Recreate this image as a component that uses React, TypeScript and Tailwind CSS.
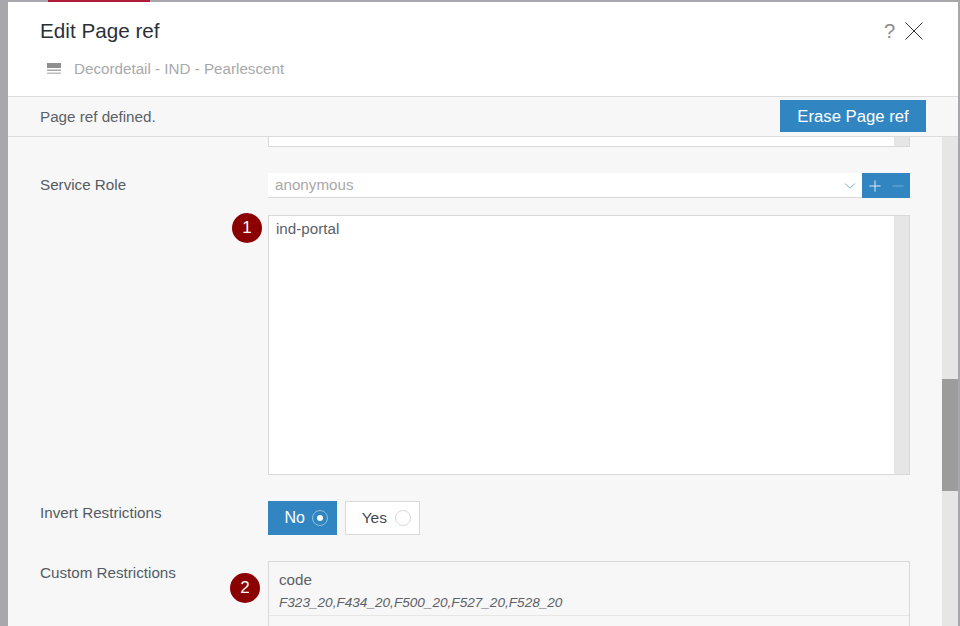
import { Minus, Plus, ChevronDown } from "lucide-react";

function Label({ children }: { children: string }) {
  return <div className="w-[228px] shrink-0 pt-[2px] text-[15.2px] leading-[20px] text-[#555b63]">{children}</div>;
}

function Badge({ n, className }: { n: number; className: string }) {
  return (
    <span
      className={`absolute flex h-[30px] w-[30px] items-center justify-center rounded-full bg-[#8b0000] text-[17px] text-white ${className}`}
    >
      {n}
    </span>
  );
}

function FakeScrollbar() {
  return <div className="w-[15px] shrink-0 bg-[#e6e6e6]" />;
}

export default function App() {
  return (
    <div className="flex h-[626px] w-[960px] flex-col overflow-hidden bg-[#a8a8ac] font-['Liberation_Sans',sans-serif]">
      <div className="ml-[48px] h-[2px] w-[102px] shrink-0 bg-[#b01c3c]" />
      <div className="ml-[8px] mr-[2px] flex min-h-0 flex-1 flex-col bg-white">
        <header className="relative h-[95px] shrink-0 border-b-[1px] border-[#dcdcdc] pl-[32px]">
          <h1 className="pt-[16px] text-[20.7px] leading-[26px] text-[#2b3038]">Edit Page ref</h1>
          <div className="mt-[15px] flex items-center text-[15.2px] leading-[20px] text-[#a9a9a9]">
            <svg width="14" height="14" viewBox="0 0 14 14" className="ml-[7px] mr-[13px]">
              <rect x="0" y="1" width="14" height="5" fill="#8f8f8f" />
              <rect x="0" y="7.5" width="14" height="1.5" fill="#a8a8a8" />
              <rect x="0" y="10.5" width="14" height="1.5" fill="#bdbdbd" />
            </svg>
            Decordetail - IND - Pearlescent
          </div>
          <div className="absolute right-[35px] top-[19px] flex items-center gap-[10px]">
            <span className="text-[20px] leading-[20px] text-[#8a8a8a]">?</span>
            <svg width="18" height="18" viewBox="0 0 18 18" stroke="#333" strokeWidth="1" fill="none">
              <path d="M0.5 0.5 L17.5 17.5 M17.5 0.5 L0.5 17.5" />
            </svg>
          </div>
        </header>

        <div className="flex h-[40px] shrink-0 items-center justify-between border-b-[1px] border-[#dcdcdc] bg-[#f7f7f7] pb-[1px] pl-[32px] pr-[32px]">
          <span className="pt-[2px] text-[15.2px] text-[#5c6168]">Page ref defined.</span>
          <button className="h-[32px] w-[146px] bg-[#3186c2] pt-[1px] text-[16.7px] text-white">Erase Page ref</button>
        </div>

        <div className="flex min-h-0 flex-1 bg-[#f7f7f7]">
          <div className="min-w-0 flex-1 overflow-hidden pl-[32px] pr-[32px]">
            <div className="ml-[228px] flex h-[10px] justify-end border-x-[1px] border-b-[1px] border-[#d9d9d9] bg-white">
              <FakeScrollbar />
            </div>

            <div className="mt-[26px] flex">
              <Label>Service Role</Label>
              <div className="relative flex-1">
                <div className="flex h-[25px]">
                  <div className="flex flex-1 items-center justify-between border-b-[1px] border-[#d9d9d9] bg-white pl-[7px] pr-[3px] pt-[1px] text-[15.2px] text-[#a9a9a9]">
                    anonymous
                    <ChevronDown size={18} strokeWidth={0.9} color="#3186c2" />
                  </div>
                  <div className="flex w-[48px] items-center justify-around bg-[#3186c2] px-[1px]">
                    <Plus size={18} strokeWidth={1.1} color="#fff" />
                    <Minus size={18} strokeWidth={1.1} color="#7db4dc" />
                  </div>
                </div>
                <div className="mt-[17px] flex h-[260px] border border-[#d9d9d9] bg-white">
                  <div className="flex-1 px-[7px] py-[4px] text-[15.2px] leading-[18px] text-[#5c6168]">ind-portal</div>
                  <FakeScrollbar />
                </div>
                <Badge n={1} className="left-[-36px] top-[40px]" />
              </div>
            </div>

            <div className="mt-[26px] flex">
              <Label>Invert Restrictions</Label>
              <div className="flex gap-[8px]">
                <div className="flex h-[34px] w-[69px] items-center justify-end gap-[7px] bg-[#3186c2] pr-[9px] text-[16px] text-white">
                  No
                  <span className="flex h-[16px] w-[16px] items-center justify-center rounded-full border border-[#8fc0e2]">
                    <span className="h-[6px] w-[6px] rounded-full bg-white" />
                  </span>
                </div>
                <div className="flex h-[34px] w-[75px] items-center justify-end gap-[8px] border border-[#d9d9d9] bg-white pr-[8px] text-[15.5px] text-[#444a52]">
                  Yes
                  <span className="h-[16px] w-[16px] rounded-full border border-[#d9d9d9]" />
                </div>
              </div>
            </div>

            <div className="mt-[26px] flex">
              <Label>Custom Restrictions</Label>
              <div className="relative flex-1 border-x-[1px] border-t-[1px] border-[#d9d9d9]">
                <div className="h-[54px] border-b-[1px] border-[#e6e6e6] px-[10px] pt-[9px]">
                  <div className="text-[15.2px] leading-[18px] text-[#5c6168]">code</div>
                  <div className="mt-[6px] text-[13.6px] italic leading-[16px] text-[#5c6168]">
                    F323_20,F434_20,F500_20,F527_20,F528_20
                  </div>
                </div>
                <div className="h-[40px]" />
                <Badge n={2} className="left-[-39px] top-[11px]" />
              </div>
            </div>
          </div>

          <div className="relative w-[16px] shrink-0 bg-[#e6e6e6]">
            <div className="mt-[242px] h-[112px] bg-[#9c9c9c]" />
          </div>
        </div>
      </div>
    </div>
  );
}
